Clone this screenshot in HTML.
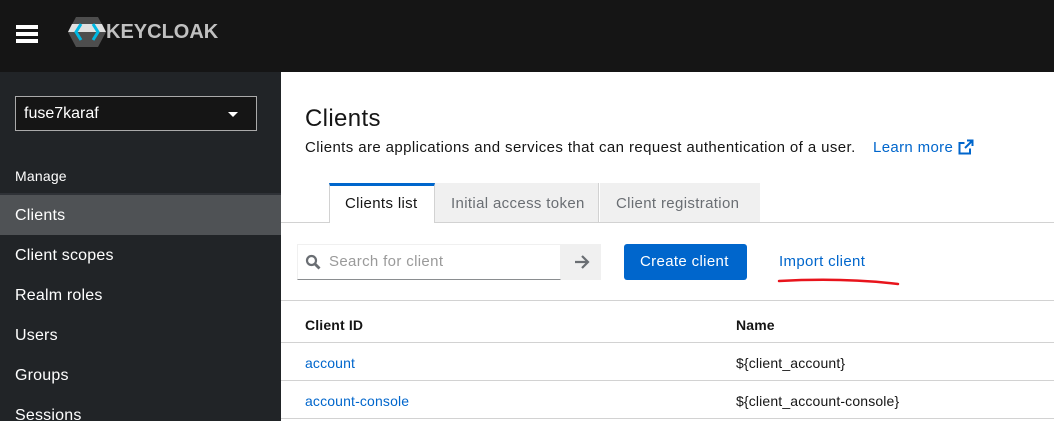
<!DOCTYPE html>
<html><head><style>
*{margin:0;padding:0;box-sizing:border-box}
body{width:1054px;height:421px;overflow:hidden;font-family:"Liberation Sans",sans-serif;background:#fff;position:relative}
.hdr{position:absolute;left:0;top:0;width:1054px;height:72px;background:#151515}
.side{position:absolute;left:0;top:72px;width:281px;height:349px;background:#212427}
.abs{position:absolute}
.nav{position:absolute;left:15px;color:#fff;font-size:16px;letter-spacing:0.2px}
.main{position:absolute;left:281px;top:72px;width:773px;height:349px}
.t{position:absolute;white-space:nowrap}
.main .t{letter-spacing:0.35px}
.main .s{letter-spacing:0.15px}
.hl{position:absolute;left:0;width:773px;height:1px;background:#d2d2d2}
</style></head><body>
<div class="hdr">
 <div class="abs" style="left:16px;top:25px;width:22px;height:3.5px;background:#fff"></div>
 <div class="abs" style="left:16px;top:32px;width:22px;height:3.5px;background:#fff"></div>
 <div class="abs" style="left:16px;top:39px;width:22px;height:3.5px;background:#fff"></div>
 <svg class="abs" style="left:67px;top:16px" width="40" height="32" viewBox="0 0 40 32">
  <polygon points="9,1 31,1 39,16 31,31 9,31 1,16" fill="#4d4d4d"/>
  <polygon points="1,16 5,8 35,8 39,16" fill="#e0e0e0"/>
  <path d="M14,8 L9,16 L14,24 M26,8 L31,16 L26,24" stroke="#00b8e3" stroke-width="3" fill="none"/>
 </svg>
 <div class="t" style="left:106px;top:21px;color:#c0c0c0;font-size:20px;font-weight:bold">KEYCLOAK</div>
</div>
<div class="side">
 <div class="abs" style="left:15px;top:24px;width:242px;height:35px;border:1px solid #aaa;background:#151515"></div>
 <div class="t" style="left:24px;top:33px;color:#fff;font-size:16px">fuse7karaf</div>
 <div class="abs" style="left:228px;top:40px;width:0;height:0;border-left:5px solid transparent;border-right:5px solid transparent;border-top:5px solid #fff"></div>
 <div class="abs" style="left:0;top:121px;width:281px;height:2px;background:#2f3237"></div>
 <div class="abs" style="left:0;top:123px;width:281px;height:40px;background:#4f5255"></div>
 <div class="nav" style="top:96px;font-size:14px">Manage</div>
 <div class="nav" style="top:135px">Clients</div>
 <div class="nav" style="top:175px">Client scopes</div>
 <div class="nav" style="top:215px">Realm roles</div>
 <div class="nav" style="top:255px">Users</div>
 <div class="nav" style="top:295px">Groups</div>
 <div class="nav" style="top:335px">Sessions</div>
</div>
<div class="main">
 <div class="t" style="left:24px;top:33px;font-size:24px;color:#151515">Clients</div>
 <div class="t" style="left:24px;top:67px;font-size:15px;color:#151515;letter-spacing:0.4px">Clients are applications and services that can request authentication of a user.</div>
 <div class="t" style="left:592px;top:67px;font-size:15px;color:#06c">Learn more</div>
 <svg class="abs" style="left:677px;top:67px" width="16" height="16" viewBox="0 0 16 16"><path d="M9,1.5 H14.5 V7 M14.5,1.5 L7,9 M12,9.5 V14.5 H1.5 V4 H6.5" stroke="#06c" stroke-width="2" fill="none"/></svg>
 <div class="hl" style="top:150px"></div>
 <div class="abs" style="left:48px;top:111px;width:106px;height:40px;background:#fff;border-top:3px solid #06c;border-left:1px solid #d2d2d2;border-right:1px solid #d2d2d2"></div>
 <div class="t" style="left:64px;top:123px;font-size:15px;color:#151515">Clients list</div>
 <div class="abs" style="left:154px;top:111px;width:164px;height:39px;background:#f0f0f0;border-right:1px solid #d2d2d2"></div>
 <div class="t" style="left:170px;top:123px;font-size:15px;color:#6a6e73">Initial access token</div>
 <div class="abs" style="left:319px;top:111px;width:160px;height:39px;background:#f0f0f0"></div>
 <div class="t" style="left:335px;top:123px;font-size:15px;color:#6a6e73">Client registration</div>
 <div class="abs" style="left:16px;top:172px;width:264px;height:36px;border:1px solid #f0f0f0;border-bottom:1px solid #8a8d90"></div>
 <svg class="abs" style="left:24px;top:182px" width="16" height="16" viewBox="0 0 16 16"><circle cx="6.5" cy="6.5" r="4.5" stroke="#6a6e73" stroke-width="2.2" fill="none"/><path d="M10,10 L14.5,14.5" stroke="#6a6e73" stroke-width="2.8"/></svg>
 <div class="t" style="left:48px;top:181px;font-size:15px;color:#9a9a9a">Search for client</div>
 <div class="abs" style="left:280px;top:172px;width:40px;height:36px;background:#f0f0f0"></div>
 <svg class="abs" style="left:293px;top:182px" width="16" height="16" viewBox="0 0 16 16"><path d="M1,8 H14 M8,2 L14,8 L8,14" stroke="#6a6e73" stroke-width="2.2" fill="none"/></svg>
 <div class="abs" style="left:343px;top:172px;width:123px;height:36px;background:#06c;border-radius:3px"></div>
 <div class="t" style="left:359px;top:181px;font-size:15px;color:#fff">Create client</div>
 <div class="t" style="left:498px;top:181px;font-size:15px;color:#06c">Import client</div>
 <svg class="abs" style="left:495px;top:202px" width="130" height="14"><path d="M3,7 C40,5 80,5 122,10" stroke="#e8141c" stroke-width="2.5" fill="none" stroke-linecap="round"/></svg>
 <div class="hl" style="top:228px"></div>
 <div class="t s" style="left:24px;top:245px;font-size:14px;font-weight:bold;color:#151515">Client ID</div>
 <div class="t s" style="left:455px;top:245px;font-size:14px;font-weight:bold;color:#151515">Name</div>
 <div class="hl" style="top:270px"></div>
 <div class="t s" style="left:24px;top:283px;font-size:14px;color:#06c">account</div>
 <div class="t s" style="left:455px;top:283px;font-size:14px;color:#151515">${client_account}</div>
 <div class="hl" style="top:308px"></div>
 <div class="t s" style="left:24px;top:321px;font-size:14px;color:#06c">account-console</div>
 <div class="t s" style="left:455px;top:321px;font-size:14px;color:#151515">${client_account-console}</div>
 <div class="hl" style="top:346px"></div>
</div>
</body></html>
